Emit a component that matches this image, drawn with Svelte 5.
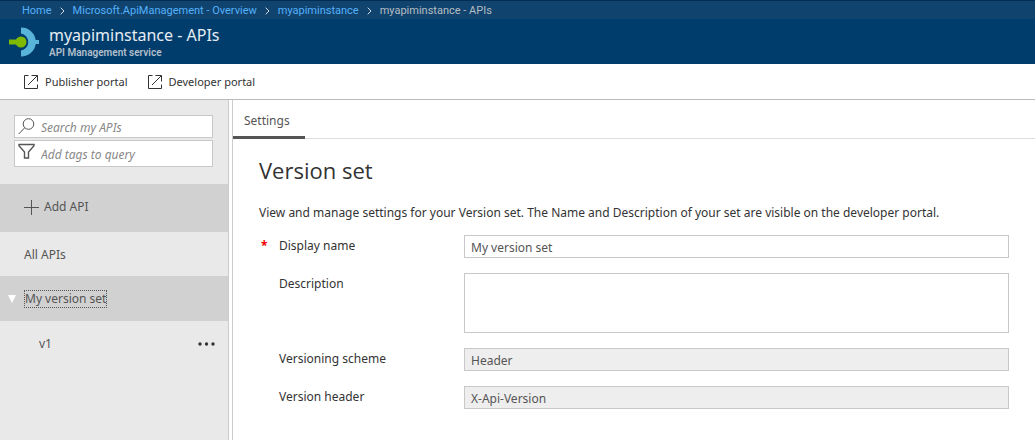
<script lang="ts">
  const crumbs = [
    { label: 'Home', href: '#home' },
    { label: 'Microsoft.ApiManagement - Overview', href: '#overview' },
    { label: 'myapiminstance', href: '#instance' },
  ];

  const portals = ['Publisher portal', 'Developer portal'];

  let search = $state('');
  let tags = $state('');
  let displayName = $state('My version set');
  let description = $state('');
  let expanded = $state(true);
</script>

<div class="page">
  <header>
    <nav class="crumbs" aria-label="Breadcrumb">
      {#each crumbs as crumb}
        <a href={crumb.href}>{crumb.label}</a>
        <svg class="chevron" width="5" height="8" viewBox="0 0 5 8" aria-hidden="true">
          <path d="M.7 .7 4 4 .7 7.3" />
        </svg>
      {/each}
      <span>myapiminstance - APIs</span>
    </nav>
    <div class="banner">
      <svg class="logo" width="30" height="30" viewBox="0 0 30 30" aria-hidden="true">
        <path
          fill="#59b4d9"
          d="M12 0.5A14.5 14.5 0 0 1 26.7 13H30v4h-3.3A14.5 14.5 0 0 1 12 29.5V23.5A8.6 8.6 0 0 0 12 6.5Z"
        />
        <circle cx="12" cy="15" r="5.5" fill="#7fba00" />
        <path fill="#7fba00" d="M0 12.5h10v5H0z" />
      </svg>
      <div>
        <h1>myapiminstance - APIs</h1>
        <p>API Management service</p>
      </div>
    </div>
  </header>

  <div class="toolbar">
    {#each portals as portal}
      <button type="button">
        <svg width="14" height="14" viewBox="0 0 14 14" aria-hidden="true">
          <path d="M4.5 .5H.5v13h13V9.5M7.5 .5h6v6M13.3 .7 4 10" />
        </svg>
        {portal}
      </button>
    {/each}
  </div>

  <div class="content">
    <aside>
      <div class="filters">
        <label class="filter">
          <svg width="17" height="17" viewBox="0 0 17 17" aria-hidden="true">
            <circle cx="10.5" cy="6" r="5.3" />
            <path d="M6.7 9.8.7 16" />
          </svg>
          <input type="text" aria-label="Search my APIs" placeholder="Search my APIs" bind:value={search} />
        </label>
        <label class="filter tags">
          <svg width="17" height="17" viewBox="0 0 17 17" aria-hidden="true">
            <path stroke-width="1.4" d="M1 1.5h15v1.2L10.5 9v6h-4V9L1 2.7z" />
          </svg>
          <input type="text" aria-label="Add tags to query" placeholder="Add tags to query" bind:value={tags} />
        </label>
      </div>

      <button type="button" class="row add">
        <svg width="15" height="15" viewBox="0 0 15 15" aria-hidden="true">
          <path d="M7.5 0v15M0 7.5h15" />
        </svg>
        Add API
      </button>
      <button type="button" class="row">All APIs</button>
      <button type="button" class="row set" aria-expanded={expanded} onclick={() => (expanded = !expanded)}>
        <svg class:closed={!expanded} width="8" height="8" viewBox="0 0 8 8" aria-hidden="true">
          <path d="M0 0h8L4 8z" />
        </svg>
        <span>My version set</span>
      </button>
      {#if expanded}
        <div class="row version">
          <button type="button">v1</button>
          <button type="button" aria-label="More actions for v1">
            <svg width="17" height="4" viewBox="0 0 17 4" aria-hidden="true">
              <circle cx="2" cy="2" r="1.7" />
              <circle cx="8.5" cy="2" r="1.7" />
              <circle cx="15" cy="2" r="1.7" />
            </svg>
          </button>
        </div>
      {/if}
    </aside>

    <main>
      <div class="tabs" role="tablist">
        <button type="button" role="tab" aria-selected="true">Settings</button>
      </div>

      <section>
        <h2>Version set</h2>
        <p>
          View and manage settings for your Version set. The Name and Description of your set are
          visible on the developer portal.
        </p>

        <form>
          <label class="required" for="display-name">Display name</label>
          <input id="display-name" type="text" required bind:value={displayName} />

          <label for="description">Description</label>
          <textarea id="description" bind:value={description}></textarea>

          <label for="scheme">Versioning scheme</label>
          <input id="scheme" type="text" value="Header" disabled />

          <label for="version-header">Version header</label>
          <input id="version-header" type="text" value="X-Api-Version" disabled />
        </form>
      </section>
    </main>
  </div>
</div>

<style>
  :global(body) {
    margin: 0;
  }

  .page {
    display: flex;
    flex-direction: column;
    min-height: 100vh;
    background: #fff;
    color: #333;
    font: 12px/16px 'Noto Sans', sans-serif;
  }

  button,
  input,
  textarea {
    box-sizing: border-box;
    margin: 0;
    padding: 0;
    border: 0;
    border-radius: 0;
    background: none;
    color: inherit;
    font: inherit;
  }
  button {
    cursor: pointer;
    text-align: left;
  }
  svg {
    flex: none;
    fill: none;
    stroke: currentColor;
  }

  header {
    background: #003d6d;
    border-top: 1px solid #002d54;
  }
  .crumbs {
    display: flex;
    align-items: center;
    gap: 8px;
    height: 18px;
    padding: 2px 22px 0;
    box-sizing: border-box;
    background: #10446f;
    color: #b5bcc2;
    font-family: Roboto, sans-serif;
    font-size: 11px;
    white-space: nowrap;
  }
  .crumbs a {
    color: #55b0fa;
    text-decoration: none;
  }
  .chevron {
    color: #d5dde4;
  }

  .banner {
    display: flex;
    align-items: center;
    gap: 10px;
    height: 45px;
    padding: 0 9px;
  }
  .logo {
    stroke: none;
  }
  h1 {
    margin: 0;
    color: #e6edf3;
    font-size: 16px;
    line-height: 22px;
    font-weight: 400;
  }
  .banner p {
    margin: 0;
    color: #b3bfca;
    font-family: Roboto, sans-serif;
    font-size: 10px;
    line-height: 14px;
    font-weight: 600;
  }

  .toolbar {
    display: flex;
    align-items: center;
    gap: 20px;
    height: 35px;
    padding: 0 24px;
    border-bottom: 1px solid #bbb;
    font-size: 11px;
  }
  .toolbar button {
    display: flex;
    align-items: center;
    gap: 7px;
  }

  .content {
    display: flex;
    flex: 1;
  }

  aside {
    flex: none;
    width: 228px;
    border-right: 1px solid #ccc;
    background: #e9e9e9;
    color: #555;
  }
  .filters {
    display: flex;
    flex-direction: column;
    gap: 2px;
    padding: 15px 15px 17px 14px;
  }
  .filter {
    display: flex;
    align-items: flex-start;
    gap: 6px;
    height: 21px;
    padding: 0 3px;
    border: 1px solid #c8c8c8;
    background: #fff;
  }
  .filter svg {
    margin-top: 2px;
  }
  .filter input {
    flex: 1;
    min-width: 0;
    height: 100%;
    padding-top: 2px;
    outline: none;
  }
  .filter input::placeholder {
    color: #888;
    font-style: italic;
    opacity: 1;
  }
  .tags {
    height: 25px;
  }

  .row {
    display: flex;
    align-items: center;
    width: 100%;
    height: 44px;
    padding: 2px 24px 0;
  }
  .add {
    gap: 5px;
    height: 48px;
    padding: 0 24px 2px;
    background: #d1d1d1;
  }
  .set {
    gap: 9px;
    height: 45px;
    padding: 0 8px;
    background: #d1d1d1;
  }
  .set svg {
    fill: #fff;
    stroke: none;
  }
  .set .closed {
    transform: rotate(-90deg);
  }
  .set span {
    outline: 1px dotted #555;
  }
  .version {
    box-sizing: border-box;
    justify-content: space-between;
    padding: 2px 13px 0 39px;
  }
  .version svg {
    display: block;
    fill: #333;
    stroke: none;
  }

  main {
    flex: 1;
    min-width: 0;
    margin-left: 3px;
    border-left: 1px solid #ccc;
  }
  .tabs {
    display: flex;
    height: 38px;
    border-bottom: 1px solid #ddd;
  }
  .tabs button {
    height: 39px;
    padding: 5px 15px 0 11px;
    border-bottom: 3px solid #555;
    color: #555;
  }

  section {
    padding: 16px 26px;
  }
  h2 {
    margin: 0;
    font-family: 'Open Sans', sans-serif;
    font-size: 22px;
    line-height: 30px;
    font-weight: 400;
  }
  section p {
    margin: 20px 0 14px;
  }
  form {
    display: grid;
    grid-template-columns: 185px 1fr;
    row-gap: 15px;
    padding-left: 20px;
  }
  form label {
    padding-top: 3px;
  }
  .required::before {
    content: '*';
    float: left;
    width: 18px;
    margin-left: -18px;
    color: #e00;
    font-weight: 700;
  }
  form input,
  textarea {
    width: 100%;
    height: 23px;
    padding: 2px 6px 0;
    border: 1px solid #c8c8c8;
    color: #555;
  }
  textarea {
    display: block;
    height: 60px;
    resize: none;
  }
  form input:disabled {
    background: #eee;
  }
</style>
